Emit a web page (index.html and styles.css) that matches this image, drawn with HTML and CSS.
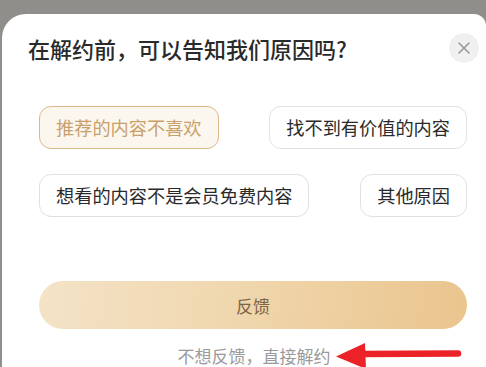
FILE: index.html
```html
<!DOCTYPE html>
<html lang="zh-CN">
<head>
<meta charset="utf-8">
<title>解约原因</title>
<link rel="stylesheet" href="styles.css">
</head>
<body>
<div class="sheet">
  <div class="header">
    <h1 class="title">在解约前，可以告知我们原因吗?</h1>
    <button class="close" aria-label="关闭">
      <svg width="14" height="14" viewBox="0 0 14 14"><path d="M2 2 L12 12 M12 2 L2 12" stroke="#9a9a9a" stroke-width="1.6" stroke-linecap="round" fill="none"/></svg>
    </button>
  </div>
  <div class="reasons">
    <span class="chip chip-active">推荐的内容不喜欢</span>
    <span class="chip">找不到有价值的内容</span>
    <span class="chip">想看的内容不是会员免费内容</span>
    <span class="chip">其他原因</span>
  </div>
  <button class="submit">反馈</button>
  <div class="skip-row">
    <span class="skip">不想反馈，直接解约</span>
    <svg class="arrow" width="130" height="32" viewBox="0 0 130 32">
      <line x1="26" y1="14" x2="123" y2="13.5" stroke="#ec2229" stroke-width="6.5" stroke-linecap="round"/>
      <polygon points="1,16.5 30,3 31,29" fill="#ec2229"/>
    </svg>
  </div>
</div>
</body>
</html>
```

FILE: styles.css
```css
html, body {
  margin: 0;
  padding: 0;
  height: 100%;
  overflow: hidden;
  background: #8f8e8b;
  font-family: "Noto Sans CJK SC", "Noto Sans", sans-serif;
}

.sheet {
  margin-top: 14px;
  margin-left: 2px;
  background: #ffffff;
  border-radius: 24px 12px 0 0;
  height: calc(100% - 14px);
  position: relative;
}

.header {
  display: flex;
  align-items: center;
  justify-content: space-between;
  padding: 19px 7px 0 26px;
  height: 30px;
}

.title {
  margin: 0;
  font-size: 22px;
  font-weight: 500;
  line-height: 30px;
  color: #2a2a2a;
}

.close {
  width: 30px;
  height: 30px;
  border-radius: 50%;
  border: none;
  background: #f0f0f0;
  display: flex;
  align-items: center;
  justify-content: center;
  padding: 0;
}

.reasons {
  display: flex;
  flex-wrap: wrap;
  justify-content: space-between;
  row-gap: 25px;
  margin: 43px 19px 0 37px;
}

.chip {
  display: inline-block;
  height: 41px;
  line-height: 41px;
  padding: 0 16px;
  font-size: 18.2px;
  color: #2a2a2a;
  border: 1px solid #e0e0e0;
  border-radius: 12px;
  background: #ffffff;
  white-space: nowrap;
}

.chip-active {
  color: #c8a06c;
  border-color: #dcb98a;
  background: #fcf7ee;
}

.submit {
  display: block;
  margin: 64px 19px 0 37px;
  width: calc(100% - 56px);
  height: 48px;
  border: none;
  border-radius: 24px;
  background: linear-gradient(100deg, #f4e3c8 0%, #efd4a8 55%, #eac48d 100%);
  color: #7c6446;
  font-family: inherit;
  font-size: 17px;
}

.skip-row {
  margin-top: 17px;
  height: 20px;
  display: flex;
  justify-content: center;
  position: relative;
}

.skip {
  font-size: 17px;
  line-height: 20px;
  color: #9a9a9a;
  margin-left: 20px;
}

.arrow {
  position: absolute;
  left: 333px;
  top: -6px;
}
```
